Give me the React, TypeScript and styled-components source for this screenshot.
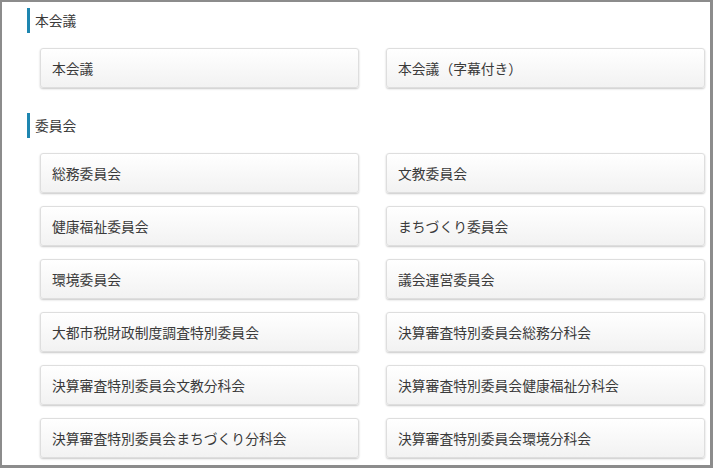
import styled, { createGlobalStyle } from "styled-components";

const GlobalStyle = createGlobalStyle`
    html, body {
        margin: 0;
        padding: 0;
        background: #ffffff;
    }
    body {
        font-family: "Noto Sans CJK JP", "Noto Sans", sans-serif;
        color: #333333;
    }
`;

const Frame = styled.div`
    box-sizing: border-box;
    width: 713px;
    height: 468px;
    border-style: solid;
    border-color: #8c8c8c;
    border-width: 2px 3px 3px 2px;
    padding: 6px 5px 0 25px;
    display: flex;
    flex-direction: column;
    gap: 25px;
    overflow: hidden;
`;

const Section = styled.section`
    display: flex;
    flex-direction: column;
    gap: 15px;
`;

const Heading = styled.h2`
    margin: 0;
    height: 25px;
    line-height: 25px;
    font-size: 13.8px;
    font-weight: 400;
    color: #3a3a3a;
    border-left: 3px solid #1e86b0;
    padding-left: 5px;
`;

const ButtonGrid = styled.div`
    display: grid;
    grid-template-columns: 319px 319px;
    column-gap: 27px;
    row-gap: 13px;
    margin-left: 13px;
`;

const LinkButton = styled.a`
    box-sizing: border-box;
    height: 40px;
    display: flex;
    align-items: center;
    padding: 0 11px;
    font-size: 13.8px;
    color: #3a3a3a;
    text-decoration: none;
    background: linear-gradient(#ffffff, #f2f2f2);
    border: 1px solid #dedede;
    border-radius: 3px;
    box-shadow: 0 1px 2px rgba(0, 0, 0, 0.22);
    cursor: pointer;
`;

const sections = [
    {
        title: "本会議",
        items: ["本会議", "本会議（字幕付き）"],
    },
    {
        title: "委員会",
        items: [
            "総務委員会",
            "文教委員会",
            "健康福祉委員会",
            "まちづくり委員会",
            "環境委員会",
            "議会運営委員会",
            "大都市税財政制度調査特別委員会",
            "決算審査特別委員会総務分科会",
            "決算審査特別委員会文教分科会",
            "決算審査特別委員会健康福祉分科会",
            "決算審査特別委員会まちづくり分科会",
            "決算審査特別委員会環境分科会",
        ],
    },
];

export default function App() {
    return (
        <>
            <GlobalStyle />
            <Frame>
                {sections.map((s) => (
                    <Section key={s.title}>
                        <Heading>{s.title}</Heading>
                        <ButtonGrid>
                            {s.items.map((item) => (
                                <LinkButton key={item}>{item}</LinkButton>
                            ))}
                        </ButtonGrid>
                    </Section>
                ))}
            </Frame>
        </>
    );
}
